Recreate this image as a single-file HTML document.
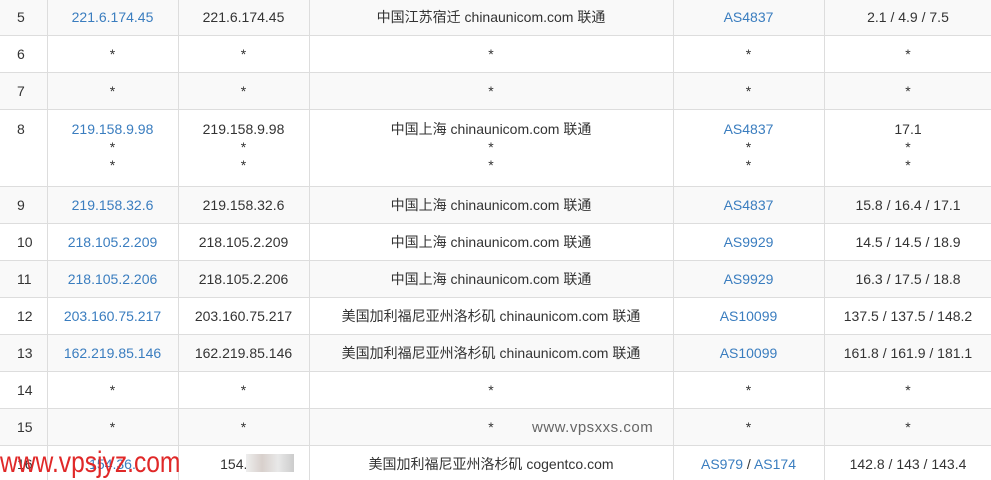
<!DOCTYPE html>
<html><head><meta charset="utf-8"><style>
html,body{margin:0;padding:0;background:#fff;width:991px;height:480px;overflow:hidden;position:relative;font-family:"Liberation Sans","Noto Sans CJK SC",sans-serif;}
table{border-collapse:collapse;position:absolute;left:0;top:-2px;table-layout:fixed;width:992px;font-size:14px;color:#333;}
td{border:1px solid #ddd;text-align:center;padding:0;height:36px;line-height:18px;vertical-align:middle;}
tr:nth-child(odd) td{background:#f9f9f9;}
td:first-child{text-align:left;padding-left:17px;border-left:none;}
a{color:#3a7dbf;text-decoration:none;}
.t td{height:66px;vertical-align:top;padding-top:10px;}
.t td:first-child{padding-left:17px;}
.wm1{position:absolute;left:0;top:446px;font-size:30px;color:#e02828;transform:scaleX(0.82);transform-origin:0 0;white-space:nowrap;}
.wm2{position:absolute;left:532px;top:419px;font-size:15px;color:#666;letter-spacing:0.5px;}
.blur{position:absolute;left:246px;top:454px;width:48px;height:18px;background:linear-gradient(90deg,#eee,#d8d0cc,#e8e8e8,#ccc);}
</style></head><body>
<table>
<colgroup><col style="width:47px"><col style="width:131px"><col style="width:131px"><col style="width:364px"><col style="width:151px"><col style="width:168px"></colgroup>
<tr><td>5</td><td><a>221.6.174.45</a></td><td>221.6.174.45</td><td>中国江苏宿迁 chinaunicom.com 联通</td><td><a>AS4837</a></td><td>2.1 / 4.9 / 7.5</td></tr>
<tr><td>6</td><td>*</td><td>*</td><td>*</td><td>*</td><td>*</td></tr>
<tr><td>7</td><td>*</td><td>*</td><td>*</td><td>*</td><td>*</td></tr>
<tr class="t"><td>8</td><td><a>219.158.9.98</a><br>*<br>*</td><td>219.158.9.98<br>*<br>*</td><td>中国上海 chinaunicom.com 联通<br>*<br>*</td><td><a>AS4837</a><br>*<br>*</td><td>17.1<br>*<br>*</td></tr>
<tr><td>9</td><td><a>219.158.32.6</a></td><td>219.158.32.6</td><td>中国上海 chinaunicom.com 联通</td><td><a>AS4837</a></td><td>15.8 / 16.4 / 17.1</td></tr>
<tr><td>10</td><td><a>218.105.2.209</a></td><td>218.105.2.209</td><td>中国上海 chinaunicom.com 联通</td><td><a>AS9929</a></td><td>14.5 / 14.5 / 18.9</td></tr>
<tr><td>11</td><td><a>218.105.2.206</a></td><td>218.105.2.206</td><td>中国上海 chinaunicom.com 联通</td><td><a>AS9929</a></td><td>16.3 / 17.5 / 18.8</td></tr>
<tr><td>12</td><td><a>203.160.75.217</a></td><td>203.160.75.217</td><td>美国加利福尼亚州洛杉矶 chinaunicom.com 联通</td><td><a>AS10099</a></td><td>137.5 / 137.5 / 148.2</td></tr>
<tr><td>13</td><td><a>162.219.85.146</a></td><td>162.219.85.146</td><td>美国加利福尼亚州洛杉矶 chinaunicom.com 联通</td><td><a>AS10099</a></td><td>161.8 / 161.9 / 181.1</td></tr>
<tr><td>14</td><td>*</td><td>*</td><td>*</td><td>*</td><td>*</td></tr>
<tr><td>15</td><td>*</td><td>*</td><td>*</td><td>*</td><td>*</td></tr>
<tr><td>16</td><td><a>154.36.</a></td><td>154.36.</td><td>美国加利福尼亚州洛杉矶 cogentco.com</td><td><a>AS979</a> / <a>AS174</a></td><td>142.8 / 143 / 143.4</td></tr>
</table>
<div class="blur"></div>
<div class="wm2">www.vpsxxs.com</div>
<div class="wm1">www.vpsjyz.com</div>
</body></html>
